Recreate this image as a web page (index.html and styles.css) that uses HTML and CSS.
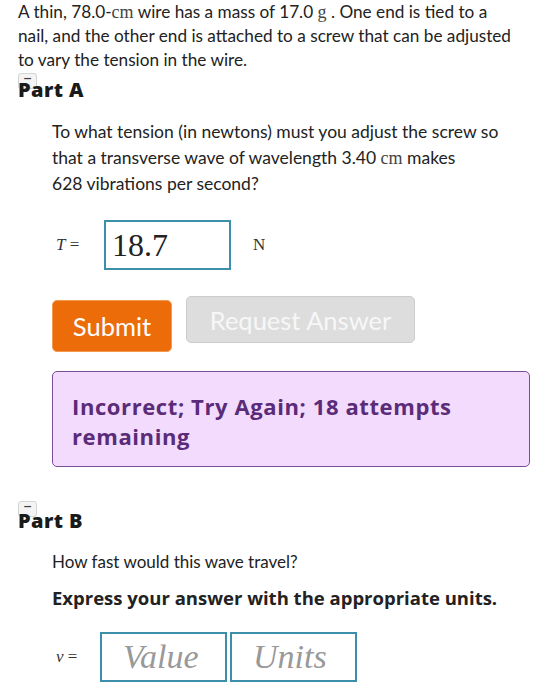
FILE: index.html
```html
<!DOCTYPE html>
<html>
<head>
<meta charset="utf-8">
<link rel="stylesheet" href="styles.css">
</head>
<body>
<div class="page">
  <p class="intro">A thin, 78.0-<span class="unit">cm</span> wire has a mass of 17.0 <span class="unit">g</span> . One end is tied to a nail, and the other end is attached to a screw that can be adjusted to vary the tension in the wire.</p>

  <section class="part part-a">
    <div class="part-head">
      <span class="toggle">&minus;</span>
      <h2 class="part-title">Part A</h2>
    </div>
    <div class="part-body">
      <p class="question">To what tension (in newtons) must you adjust the screw so that a transverse wave of wavelength 3.40 <span class="unit">cm</span> makes<br>628 vibrations per second?</p>
      <div class="answer-row">
        <span class="var"><i>T</i> =</span>
        <span class="field field-t">18.7</span>
        <span class="unit-n">N</span>
      </div>
      <div class="buttons">
        <button class="btn btn-submit">Submit</button>
        <button class="btn btn-request">Request Answer</button>
      </div>
      <div class="feedback">Incorrect; Try Again; 18 attempts remaining</div>
    </div>
  </section>

  <section class="part part-b">
    <div class="part-head">
      <span class="toggle">&minus;</span>
      <h2 class="part-title">Part B</h2>
    </div>
    <div class="part-body">
      <p class="question-b">How fast would this wave travel?</p>
      <p class="instruction">Express your answer with the appropriate units.</p>
      <div class="answer-row answer-row-b">
        <span class="var var-v"><i>v</i> =</span>
        <span class="field field-v placeholder">Value</span>
        <span class="field field-u placeholder">Units</span>
      </div>
    </div>
  </section>
</div>
</body>
</html>
```

FILE: styles.css
```css
html, body {
  margin: 0;
  padding: 0;
  background: #ffffff;
}

body {
  font-family: "Lato", "Open Sans", sans-serif;
  color: #222222;
}

.page {
  padding: 0 0 0 18px;
}

.intro {
  margin: 0;
  font-size: 17.2px;
  line-height: 24px;
  width: 496px;
}

.unit {
  font-family: "Liberation Serif", "DejaVu Serif", serif;
  font-size: 18px;
  color: #444;
}

.part-head {
  position: relative;
  height: 28px;
}

.part-a .part-head {
  margin-top: 1px;
}

.toggle {
  position: absolute;
  left: 0;
  top: 0;
  width: 17px;
  height: 14px;
  border: 1px solid #d4d4d4;
  border-radius: 3px;
  background: #f4f4f4;
  font-family: "DejaVu Sans", sans-serif;
  font-size: 11px;
  line-height: 9px;
  text-align: center;
  color: #444;
  font-weight: bold;
}

.part-title {
  position: relative;
  margin: 0;
  padding-top: 6px;
  font-family: "Open Sans", "Lato", sans-serif;
  font-size: 20px;
  line-height: 22px;
  font-weight: 800;
  letter-spacing: 0.4px;
  color: #1a1a1a;
}

.part-b .part-title {
  padding-top: 9px;
}

.part-body {
  padding-left: 34px;
}

.question {
  margin: 18px 0 0 0;
  font-size: 17.5px;
  line-height: 26px;
  width: 460px;
}

.answer-row {
  display: flex;
  align-items: center;
  margin-top: 23px;
}

.var {
  font-family: "Liberation Serif", "DejaVu Serif", serif;
  font-size: 17px;
  width: 52px;
  padding-left: 4px;
  box-sizing: border-box;
  color: #333;
}

.var-v {
  width: 48px;
}

.var i {
  font-style: italic;
}

.field {
  box-sizing: border-box;
  border: 2px solid #3d8eaa;
  height: 50px;
  font-family: "Liberation Serif", "DejaVu Serif", serif;
  display: flex;
  align-items: center;
}

.field-t {
  width: 127px;
  font-size: 32px;
  padding-left: 6px;
  color: #222;
}

.unit-n {
  font-family: "Liberation Serif", "DejaVu Serif", serif;
  font-size: 17px;
  margin-left: 22px;
  color: #333;
}

.buttons {
  display: flex;
  align-items: flex-start;
  gap: 14px;
  margin-top: 26px;
}

.btn {
  font-family: "Lato", "Open Sans", sans-serif;
  border-radius: 5px;
  font-size: 25.5px;
  cursor: pointer;
  padding: 0;
}

.btn-submit {
  margin-top: 4px;
  width: 120px;
  height: 52px;
  background: #ec6c0a;
  border: 1px solid #f29a50;
  color: #ffffff;
}

.btn-request {
  width: 229px;
  height: 47px;
  background: #dddddd;
  border: 1px solid #cccccc;
  color: #f7f7f7;
}

.feedback {
  margin-top: 19px;
  width: 478px;
  box-sizing: border-box;
  height: 96px;
  padding: 19px 20px 0 19px;
  background: #f2dbfc;
  border: 1.5px solid #7d4c92;
  border-radius: 5px;
  color: #5a2b78;
  font-family: "Open Sans", "Lato", sans-serif;
  font-weight: 700;
  font-size: 22px;
  letter-spacing: 0.6px;
  line-height: 30px;
}

.part-b .part-head {
  margin-top: 34px;
}

.question-b {
  margin: 20px 0 0 0;
  font-size: 17px;
  line-height: 26px;
}

.instruction {
  margin: 10px 0 0 0;
  font-family: "Open Sans", "Lato", sans-serif;
  font-size: 18.5px;
  line-height: 26px;
  font-weight: 700;
}

.answer-row-b {
  margin-top: 21px;
}

.field-v,
.field-u {
  width: 127px;
  font-size: 34px;
  font-style: italic;
  color: #999;
  padding-left: 21px;
}

.field-u {
  margin-left: 3px;
}
```
